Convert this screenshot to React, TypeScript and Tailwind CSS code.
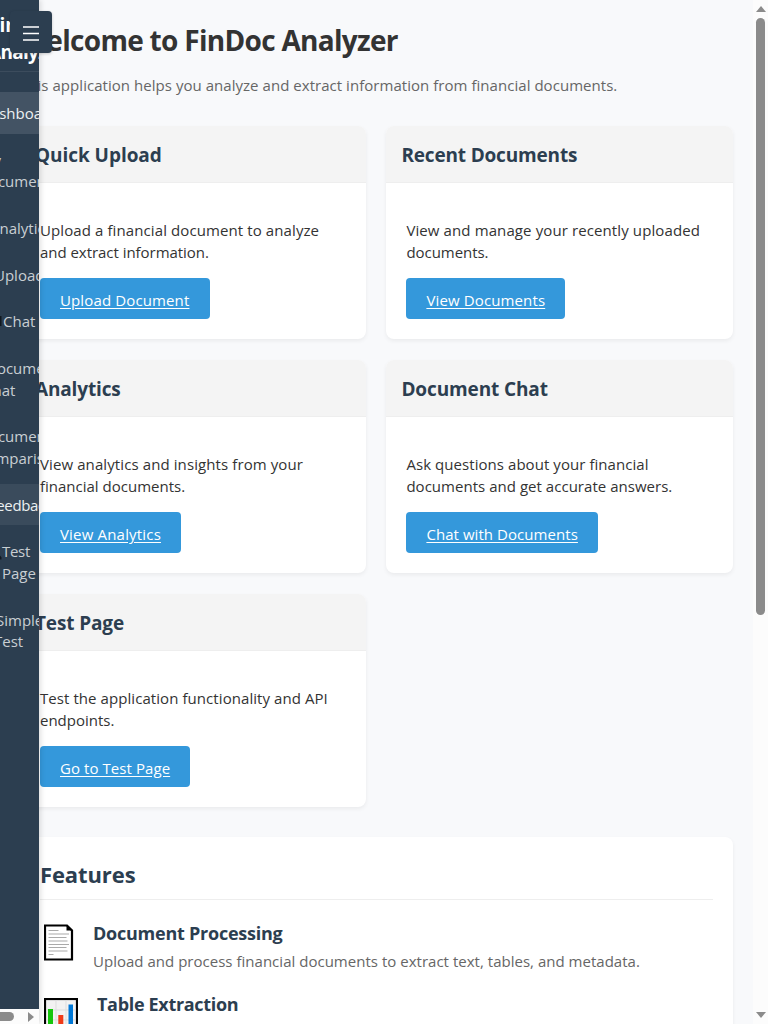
import React from 'react';

type CardData = {
  title: string;
  titleClass: string;
  lines: { text: string; cls: string }[];
  action: string;
  actionClass: string;
  buttonClass: string;
};

const cards: CardData[] = [
  {
    title: 'Quick Upload',
    titleClass: 'tracking-[-0.05px]',
    lines: [
      { text: 'Upload a financial document to analyze', cls: 'tracking-[0.1px]' },
      { text: 'and extract information.', cls: 'tracking-[-0.04px]' },
    ],
    action: 'Upload Document',
    actionClass: 'tracking-[0.13px]',
    buttonClass: 'w-[169.5px]',
  },
  {
    title: 'Recent Documents',
    titleClass: 'tracking-[-0.17px]',
    lines: [
      { text: 'View and manage your recently uploaded', cls: 'tracking-[0.11px]' },
      { text: 'documents.', cls: 'tracking-[-0.04px]' },
    ],
    action: 'View Documents',
    actionClass: 'tracking-[0.13px]',
    buttonClass: 'w-[158.5px]',
  },
  {
    title: 'Analytics',
    titleClass: 'tracking-[-0.15px]',
    lines: [
      { text: 'View analytics and insights from your', cls: 'tracking-[0.1px]' },
      { text: 'financial documents.', cls: 'tracking-[0px]' },
    ],
    action: 'View Analytics',
    actionClass: 'tracking-[0.18px]',
    buttonClass: 'w-[141px]',
  },
  {
    title: 'Document Chat',
    titleClass: 'tracking-[-0.12px]',
    lines: [
      { text: 'Ask questions about your financial', cls: 'tracking-[0.06px]' },
      { text: 'documents and get accurate answers.', cls: 'tracking-[0.03px]' },
    ],
    action: 'Chat with Documents',
    actionClass: 'tracking-[0.06px]',
    buttonClass: 'w-[191.8px]',
  },
  {
    title: 'Test Page',
    titleClass: 'tracking-[-0.13px]',
    lines: [
      { text: 'Test the application functionality and API', cls: 'tracking-[0.07px]' },
      { text: 'endpoints.', cls: 'tracking-[0px]' },
    ],
    action: 'Go to Test Page',
    actionClass: 'tracking-[0.07px]',
    buttonClass: 'w-[150px]',
  },
];

type NavLine = { text: string; shift: string };

const navItems: { lines: NavLine[]; tone: string; mark?: string }[] = [
  { lines: [{ text: 'Dashboard', shift: '-ml-[20px]' }], tone: 'bg-[#435364] text-[#ecf0f1] font-medium' },
  {
    lines: [
      { text: 'My', shift: '-ml-[20px]' },
      { text: 'Documents', shift: '-ml-[22px]' },
    ],
    tone: 'text-[#c9ced3]',
  },
  { lines: [{ text: 'Analytics', shift: '-ml-[10px]' }], tone: 'text-[#c9ced3]' },
  { lines: [{ text: 'Upload', shift: '-ml-[6px]' }], tone: 'text-[#c9ced3]' },
  { lines: [{ text: 'Chat', shift: 'ml-[3px]' }], tone: 'text-[#c9ced3]', mark: 'M0 16H1.500V26H0Z' },
  {
    lines: [
      { text: 'Document', shift: '-ml-[14px]' },
      { text: 'Chat', shift: '-ml-[17px]' },
    ],
    tone: 'text-[#c9ced3]',
  },
  {
    lines: [
      { text: 'Document', shift: '-ml-[22px]' },
      { text: 'Comparison', shift: '-ml-[23px]' },
    ],
    tone: 'text-[#c9ced3]',
  },
  {
    lines: [{ text: 'Feedback', shift: '-ml-[11px] tracking-[-0.4px]' }],
    tone: 'bg-[#3a4b5c] text-[#ecf0f1] font-medium',
  },
  {
    lines: [
      { text: 'Test', shift: 'ml-[2px] tracking-[-0.3px]' },
      { text: 'Page', shift: 'ml-[2px]' },
    ],
    tone: 'text-[#c9ced3]',
    mark: 'M0 25.500L1.500 27.500V29.500H0Z',
  },
  {
    lines: [
      { text: 'Simple', shift: '-ml-[4px]' },
      { text: 'Test', shift: '-ml-[6px]' },
    ],
    tone: 'text-[#c9ced3]',
  },
];

function Card({ card }: { card: CardData }) {
  return (
    <section className="h-[213.3px] overflow-hidden rounded-lg bg-white shadow-[0_2px_4px_rgba(0,0,0,0.06)]">
      <h3
        className={`flex h-[56.8px] items-center border-b border-[#eeeeee] bg-[#f4f4f4] pl-[15px] pt-[2.6px] text-[19px] font-bold whitespace-nowrap text-[#2c3e50] ${card.titleClass}`}
      >
        {card.title}
      </h3>
      <div className="px-5 pt-[36px]">
        {card.lines.map((l) => (
          <p key={l.text} className={`h-[22px] text-[15px] leading-[22px] whitespace-nowrap text-[#333] ${l.cls}`}>
            {l.text}
          </p>
        ))}
        <a
          className={`mt-[15px] flex h-[41.6px] items-center rounded-[4px] bg-[#3498db] pl-5 pt-[3px] text-[15px] whitespace-nowrap text-white underline underline-offset-2 ${card.buttonClass}`}
        >
          <span className={card.actionClass}>{card.action}</span>
        </a>
      </div>
    </section>
  );
}

function PageIcon() {
  return (
    <svg width="30" height="37" viewBox="0 0 30 37" className="shrink-0">
      <path d="M1 1.5H23L28 6.5V35.5H1Z" fill="#fff" stroke="#000" strokeWidth="2.2" />
      <path d="M22.5 1V6.5H28.5Z" fill="#000" />
      <path
        d="M4.5 6.5h10M4.5 10h20.5M4.5 13.5h18M4.5 17h19M4.5 20.5h20.5M4.5 23.5h18M4.5 27h19M4.5 30.500h5"
        stroke="#aaa"
        strokeWidth="1.2"
      />
    </svg>
  );
}

function ChartIcon() {
  return (
    <svg width="34" height="36" viewBox="0 0 34 36" className="shrink-0">
      <rect x="1" y="1" width="32" height="34" fill="#f2f2f2" stroke="#000" strokeWidth="2.2" />
      <path d="M2 12H32M2 22H32M12 2V34M22 2V34" stroke="#ddd" />
      <rect x="4" y="11" width="5" height="23" fill="#16c60c" />
      <rect x="14.300" y="17" width="5" height="17" fill="#f03a17" />
      <rect x="24.500" y="6.500" width="4.500" height="28" fill="#0078d7" />
    </svg>
  );
}

function Sidebar() {
  return (
    <aside className="absolute top-0 left-0 flex h-[1024px] w-[39px] flex-col shadow-[2px_0_5px_rgba(0,0,0,0.12)]">
      <div className="flex grow flex-col overflow-hidden bg-[#2c3e50]">
        <div className="h-[72px] shrink-0 border-b border-[#3c4c5d] pt-[12px] text-[19px] leading-[27px] font-bold text-white">
          <div className="-ml-[11px] whitespace-nowrap">FinDoc</div>
          <div className="-ml-[12px] whitespace-nowrap tracking-[-0.7px]">Analyzer</div>
        </div>
        <nav className="mt-5 flex grow flex-col gap-[5px]">
          {navItems.map((item, i) => (
            <div key={i} className={`relative shrink-0 pt-[11px] pb-[9px] text-[15px] leading-[21.65px] ${item.tone}`}>
              {item.lines.map((line) => (
                <div key={line.text} className={`whitespace-nowrap ${line.shift}`}>
                  {line.text}
                </div>
              ))}
              {item.mark && (
                <svg width="3" height="40" viewBox="0 0 3 40" className="absolute top-0 left-0">
                  <path d={item.mark} fill="#101820" />
                </svg>
              )}
            </div>
          ))}
        </nav>
      </div>
      <div className="flex h-[15px] shrink-0 items-center justify-between bg-[#fcfcfc] pr-[5px]">
        <div className="h-[9px] w-[14px] rounded-r-full bg-[#8b8b8b]" />
        <svg width="6" height="10" viewBox="0 0 6 10">
          <path d="M0 0L6 5L0 10Z" fill="#8b8b8b" />
        </svg>
      </div>
    </aside>
  );
}

function Scrollbar() {
  return (
    <div className="flex h-full w-[15px] shrink-0 flex-col items-center bg-[#fcfcfc] pt-[6px] pb-[6px]">
      <svg width="10" height="6" viewBox="0 0 10 6" className="shrink-0">
        <path d="M0 6L5 0L10 6Z" fill="#8b8b8b" />
      </svg>
      <div className="mt-[6px] h-[597px] w-[9px] shrink-0 rounded-full bg-[#8b8b8b]" />
      <svg width="10" height="6" viewBox="0 0 10 6" className="mt-auto shrink-0">
        <path d="M0 0L5 6L10 0Z" fill="#8b8b8b" />
      </svg>
    </div>
  );
}

export default function App() {
  return (
    <div className="relative flex h-[1024px] w-[768px] overflow-hidden bg-[#f8f9fb] font-['Open_Sans','Noto_Sans',sans-serif]">
      <main className="h-full w-[753px] shrink-0 overflow-hidden px-5">
        <h1 className="mt-[20px] h-[40px] text-[28px] leading-[40px] font-bold whitespace-nowrap text-[#333]">
          <span className="tracking-[-0.7px]">Welcome to FinDoc Analyzer</span>
        </h1>
        <p className="mt-[14px] h-[22px] text-[15px] leading-[22px] whitespace-nowrap text-[#666]">
          <span className="tracking-[0.04px]">
            This application helps you analyze and extract information from financial documents.
          </span>
        </p>
        <div className="mt-[30px] grid grid-cols-[346.4px_346.6px] gap-x-[20px] gap-y-[20.6px]">
          {cards.map((c) => (
            <Card key={c.title} card={c} />
          ))}
        </div>
        <section className="mt-[30.4px] h-[400px] rounded-lg bg-white px-5 pt-5 shadow-[0_2px_4px_rgba(0,0,0,0.06)]">
          <h2 className="h-[43px] border-b border-[#eeeeee] text-[22px] leading-[35px] font-bold text-[#2c3e50]">
            <span className="tracking-[-0.1px]">Features</span>
          </h2>
          <div className="mt-[24px] flex pl-1">
            <PageIcon />
            <div className="ml-[19px] -mt-[4px]">
              <h3 className="h-[26px] text-[18px] leading-[26px] font-bold whitespace-nowrap text-[#2c3e50]">
                <span className="tracking-[-0.24px]">Document Processing</span>
              </h3>
              <p className="mt-[4px] h-[22px] text-[15px] leading-[22px] whitespace-nowrap text-[#666]">
                <span className="tracking-[0.02px]">
                  Upload and process financial documents to extract text, tables, and metadata.
                </span>
              </p>
            </div>
          </div>
          <div className="mt-[25.500px] flex pl-1">
            <ChartIcon />
            <h3 className="ml-[19px] -mt-[6.500px] h-[26px] text-[18px] leading-[26px] font-bold whitespace-nowrap text-[#2c3e50]">
              <span className="tracking-[-0.32px]">Table Extraction</span>
            </h3>
          </div>
        </section>
      </main>
      <Scrollbar />
      <Sidebar />
      <button className="absolute top-[10.500px] left-[10px] flex h-[42px] w-[42px] items-center justify-center rounded-[4px] bg-[#2c3e50] pt-[3px] shadow-[0_1px_3px_rgba(0,0,0,0.2)]">
        <svg width="16" height="15" viewBox="0 0 16 15">
          <path d="M0 1H16M0 7.500H16M0 14H16" stroke="#fff" strokeWidth="1.300" />
        </svg>
      </button>
    </div>
  );
}
